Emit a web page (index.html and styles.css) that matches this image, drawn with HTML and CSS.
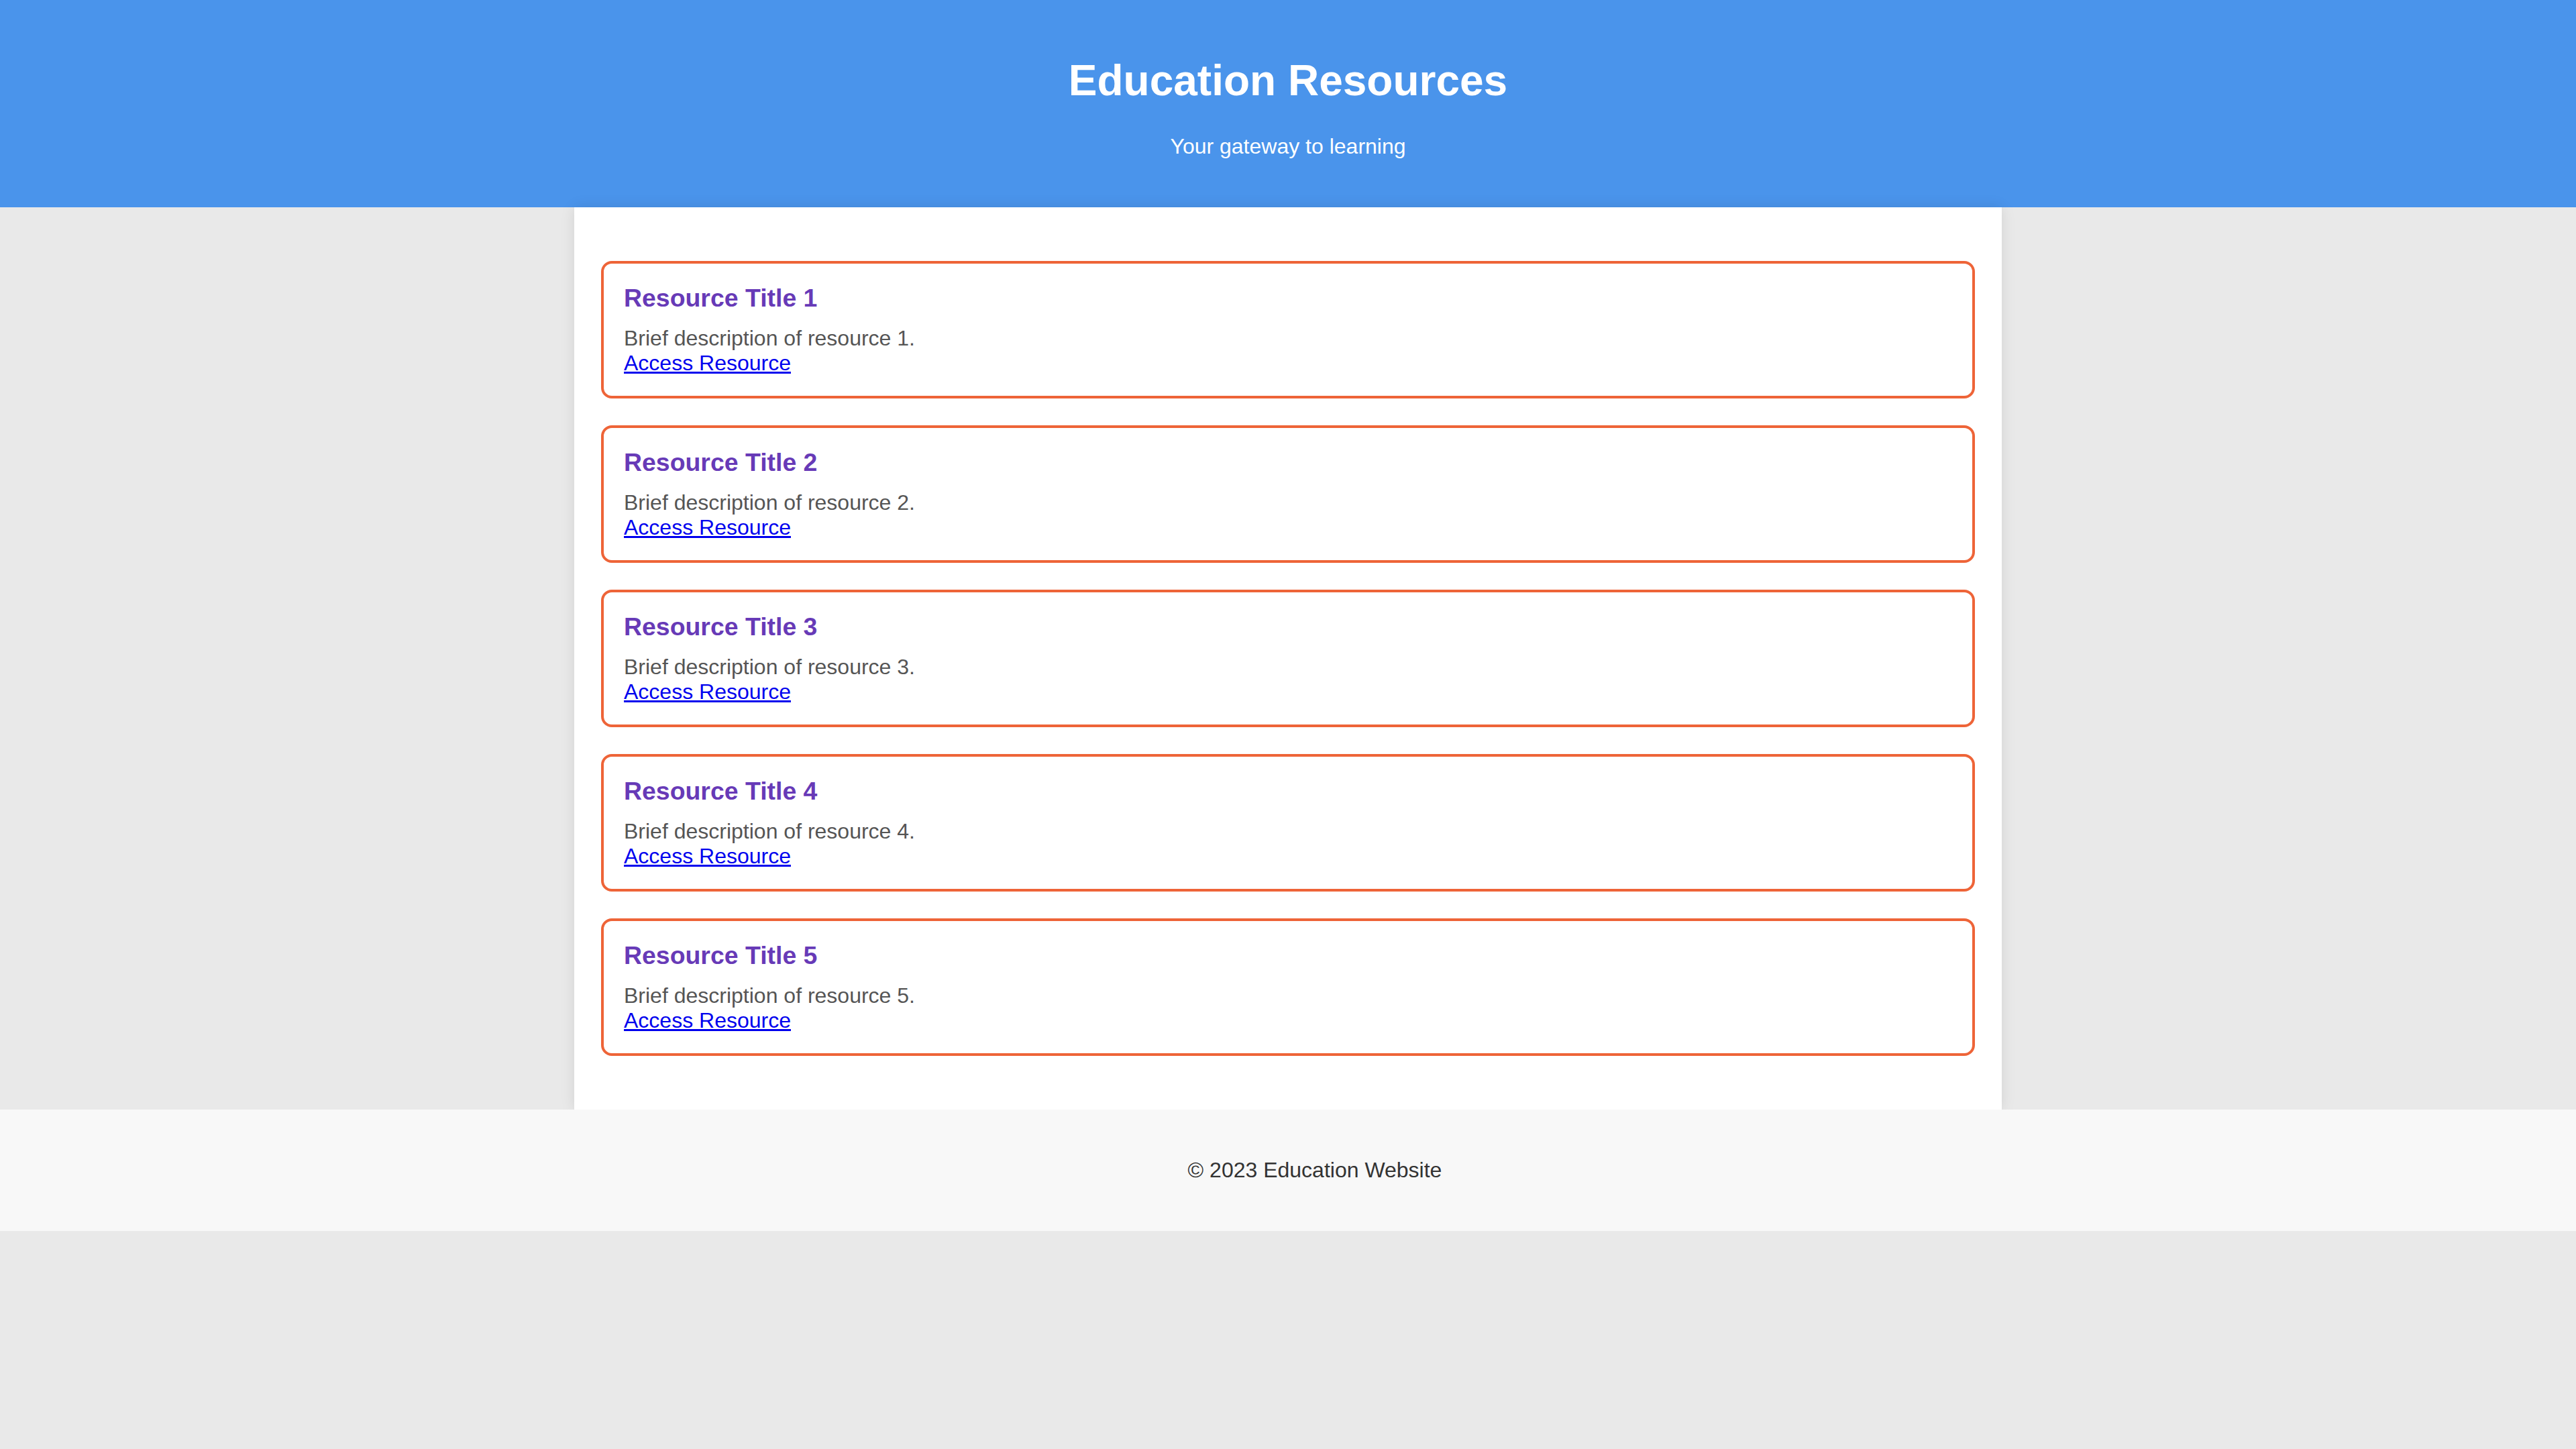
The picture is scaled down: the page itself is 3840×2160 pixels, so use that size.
FILE: index.html
```html
<!DOCTYPE html>
<html lang="en">
<head>
<meta charset="UTF-8">
<title>Education Resources</title>
<link rel="stylesheet" href="styles.css">
</head>
<body>
<header class="site-header">
  <h1 class="site-title">Education Resources</h1>
  <p class="site-tagline">Your gateway to learning</p>
</header>
<main class="content">
  <section class="resource-card">
    <h3 class="resource-title">Resource Title 1</h3>
    <p class="resource-desc">Brief description of resource 1.</p>
    <a class="resource-link" href="#">Access Resource</a>
  </section>
  <section class="resource-card">
    <h3 class="resource-title">Resource Title 2</h3>
    <p class="resource-desc">Brief description of resource 2.</p>
    <a class="resource-link" href="#">Access Resource</a>
  </section>
  <section class="resource-card">
    <h3 class="resource-title">Resource Title 3</h3>
    <p class="resource-desc">Brief description of resource 3.</p>
    <a class="resource-link" href="#">Access Resource</a>
  </section>
  <section class="resource-card">
    <h3 class="resource-title">Resource Title 4</h3>
    <p class="resource-desc">Brief description of resource 4.</p>
    <a class="resource-link" href="#">Access Resource</a>
  </section>
  <section class="resource-card">
    <h3 class="resource-title">Resource Title 5</h3>
    <p class="resource-desc">Brief description of resource 5.</p>
    <a class="resource-link" href="#">Access Resource</a>
  </section>
</main>
<footer class="site-footer">
  <p class="footer-text">&copy; 2023 Education Website</p>
</footer>
</body>
</html>
```
FILE: styles.css
```css
html, body {
  margin: 0;
  padding: 0;
}

body {
  font-family: "Liberation Sans", Arial, sans-serif;
  font-size: 32px;
  background: #e9e9e9;
  overflow: hidden;
}

.site-header {
  background: #4a94eb;
  color: #ffffff;
  text-align: center;
  padding: 40px;
}

.site-title {
  font-size: 64px;
  font-weight: bold;
  margin: 42.88px 0;
}

.site-tagline {
  font-size: 32px;
  margin: 32px 0;
}

.content {
  max-width: 2048px;
  margin: 0 auto;
  padding: 40px;
  background: #ffffff;
  box-shadow: 0 0 20px rgba(0, 0, 0, 0.1);
}

.resource-card {
  border: 4px solid #ee6438;
  border-radius: 16px;
  padding: 30px;
  margin: 40px 0;
}

.resource-title {
  font-size: 37.44px;
  font-weight: bold;
  color: #673ab7;
  margin: 0 0 20px;
}

.resource-desc {
  color: #555555;
  margin: 0;
}

.resource-link {
  color: #0000ee;
  text-decoration: underline;
}

.site-footer {
  background: #f8f8f8;
  text-align: center;
  padding: 40px;
  width: 100%;
}

.footer-text {
  color: #333333;
  margin: 32px 0;
}
```
